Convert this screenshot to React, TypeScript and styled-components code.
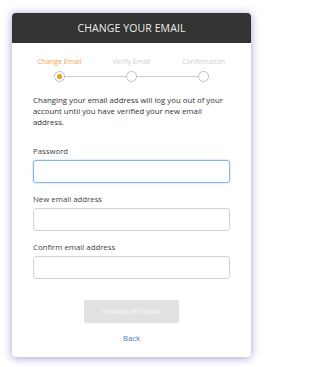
import React from "react";
import styled, { createGlobalStyle } from "styled-components";

const Global = createGlobalStyle`
  html, body { margin: 0; padding: 0; background: #ffffff; }
  body { font-family: "Open Sans", "Liberation Sans", sans-serif; }
  * { box-sizing: border-box; }
`;

const Page = styled.div`
  padding: 13px 11px 10px 12px;
`;

const Card = styled.div`
  width: 239px;
  height: 344px;
  background: #ffffff;
  border-radius: 4px;
  box-shadow: 0 1px 8px rgba(90, 90, 190, 0.6);
  display: flex;
  flex-direction: column;
`;

const Header = styled.div`
  height: 30px;
  background: #333333;
  border-radius: 4px 4px 0 0;
  color: #eeeeee;
  font-size: 10.5px;
  display: flex;
  align-items: center;
  justify-content: center;
  letter-spacing: 0.1px;
`;

const Body = styled.div`
  padding: 14px 21px 0;
  display: flex;
  flex-direction: column;
`;

const Steps = styled.div`
  display: grid;
  grid-template-columns: repeat(3, 72px);
  justify-content: center;
  margin: 0 -20px;
`;

const Step = styled.div`
  display: flex;
  flex-direction: column;
  align-items: center;
`;

const StepLabel = styled.div<{ $active?: boolean }>`
  font-size: 7px;
  line-height: 10px;
  color: ${(p) => (p.$active ? "#f6a24a" : "#cfcfcf")};
  white-space: nowrap;
`;

const DotRow = styled.div<{ $first?: boolean; $last?: boolean }>`
  position: relative;
  width: 100%;
  height: 11px;
  margin-top: 3.5px;
  display: flex;
  justify-content: center;
  &::before, &::after {
    content: "";
    position: absolute;
    top: 5px;
    height: 1px;
    background: #cccccc;
    width: 50%;
  }
  &::before {
    left: 0;
    display: ${(p) => (p.$first ? "none" : "block")};
  }
  &::after {
    right: 0;
    display: ${(p) => (p.$last ? "none" : "block")};
  }
`;

const Dot = styled.div<{ $active?: boolean }>`
  position: relative;
  z-index: 1;
  width: 11px;
  height: 11px;
  border-radius: 50%;
  border: 1px solid #bdbdbd;
  background: #ffffff;
  display: flex;
  align-items: center;
  justify-content: center;
  &::after {
    content: "";
    display: ${(p) => (p.$active ? "block" : "none")};
    width: 5px;
    height: 5px;
    border-radius: 50%;
    background: #f7941d;
  }
`;

const Intro = styled.p`
  margin: 13px 0 0;
  font-size: 7.8px;
  line-height: 11px;
  color: #333333;
`;

const Field = styled.div<{ $first?: boolean }>`
  display: flex;
  flex-direction: column;
  margin-top: ${(p) => (p.$first ? "18.5px" : "11px")};
`;

const Label = styled.label`
  font-size: 7.8px;
  line-height: 10px;
  color: #444444;
  margin-bottom: 4px;
`;

const Input = styled.div<{ $focused?: boolean }>`
  height: 23px;
  border-radius: 3px;
  border: 1px solid ${(p) => (p.$focused ? "#86b6ea" : "#d3d3d3")};
  box-shadow: ${(p) => (p.$focused ? "0 0 2px rgba(100, 160, 230, 0.6)" : "none")};
  background: #ffffff;
`;

const Actions = styled.div`
  display: flex;
  flex-direction: column;
  align-items: center;
  margin-top: 21px;
`;

const Button = styled.button`
  width: 95px;
  height: 23px;
  border: none;
  border-radius: 2px;
  background: #e1e1e1;
  color: #fafafa;
  font-family: "Open Sans", "Liberation Sans", sans-serif;
  font-size: 6.8px;
  padding: 0;
`;

const BackLink = styled.a`
  margin-top: 10px;
  font-size: 7.8px;
  line-height: 10px;
  color: #4a7cb8;
  text-decoration: none;
`;

export default function App() {
  return (
    <>
      <Global />
      <Page>
        <Card>
          <Header>CHANGE YOUR EMAIL</Header>
          <Body>
            <Steps>
              <Step>
                <StepLabel $active>Change Email</StepLabel>
                <DotRow $first>
                  <Dot $active />
                </DotRow>
              </Step>
              <Step>
                <StepLabel>Verify Email</StepLabel>
                <DotRow>
                  <Dot />
                </DotRow>
              </Step>
              <Step>
                <StepLabel>Confirmation</StepLabel>
                <DotRow $last>
                  <Dot />
                </DotRow>
              </Step>
            </Steps>
            <Intro>
              Changing your email address will log you out of your account until
              you have verified your new email address.
            </Intro>
            <Field $first>
              <Label>Password</Label>
              <Input $focused />
            </Field>
            <Field>
              <Label>New email address</Label>
              <Input />
            </Field>
            <Field>
              <Label>Confirm email address</Label>
              <Input />
            </Field>
            <Actions>
              <Button>CHANGE MY EMAIL</Button>
              <BackLink href="#">Back</BackLink>
            </Actions>
          </Body>
        </Card>
      </Page>
    </>
  );
}
